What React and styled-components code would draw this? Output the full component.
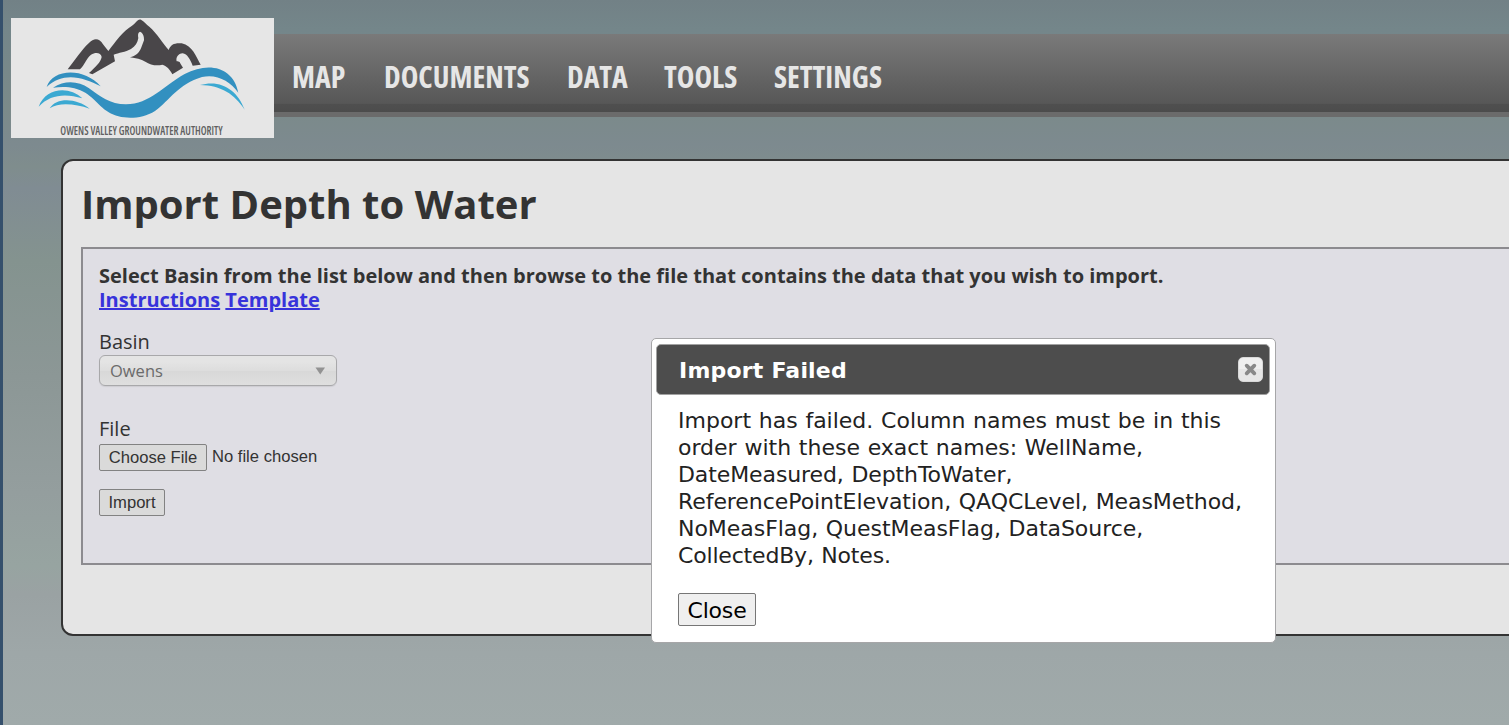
import React from "react";
import styled, { createGlobalStyle } from "styled-components";

const GlobalStyle = createGlobalStyle`
  *, *::before, *::after { box-sizing: border-box; }
  body { margin: 0; overflow: hidden; }
`;

const Page = styled.div`
  width: 100%;
  height: 725px;
  overflow: hidden;
  border-left: 3px solid #35506c;
  background: linear-gradient(180deg, #728186 0%, #74868a 4%, #7b8a8a 15%, #7d8a8f 20%, #7f8d8d 23%, #808c93 26%, #84938f 36%, #8c9796 52%, #949e9e 68%, #97a4a1 78%, #9aa2a3 82%, #9ea7a8 90%, #a0aaaa 100%);
  color: #333;
  font-family: "Open Sans", sans-serif;
`;

const Header = styled.header`
  display: flex;
  align-items: flex-start;
  padding: 18px 0 0 8px;
`;

const Logo = styled.svg`
  display: block;
  flex: none;
  width: 263px;
  height: 120px;
  background: #e6e6e6;
`;

const Nav = styled.nav`
  flex: 1;
  display: flex;
  align-items: center;
  gap: 38px;
  height: 83px;
  margin-top: 16px;
  padding: 7px 0 0 18px;
  border-bottom: 5px solid #6b6b6b;
  background: linear-gradient(180deg, #7a7a7a 0%, #606060 65%, #575757 89%, #4f4f4f 90%, #4c4c4c 100%);
`;

const NavLink = styled.a`
  width: ${(p) => p.$width}px;
  color: #e6e6e6;
  font-size: 29.8px;
  font-weight: 700;
  font-stretch: 75%;
  line-height: 40px;
  white-space: nowrap;
`;

const Panel = styled.main`
  width: 1600px;
  height: 477px;
  margin: 21px 0 0 58px;
  padding: 17px 18px 18px;
  border: 2px solid #333;
  border-radius: 12px;
  background: #e5e5e5;
`;

const Title = styled.h1`
  margin: 0 0 17px;
  height: 52px;
  font-size: 40px;
  line-height: 52px;
  font-weight: 700;
  white-space: nowrap;
`;

const ImportBox = styled.section`
  height: 318px;
  padding: 15px 16px;
  border: 2px solid #8c8b8f;
  background: #dfdee4;
`;

const Intro = styled.div`
  height: 48px;
  font-size: 20px;
  font-weight: 700;
  line-height: 24px;
  white-space: nowrap;
`;

const Link = styled.a`
  color: #3733db;
  text-decoration: underline;
  text-decoration-thickness: 2px;
`;

const Label = styled.div`
  height: 26px;
  margin-top: ${(p) => p.$gap}px;
  font-size: 20px;
  line-height: 26px;
`;

const Select = styled.div`
  display: flex;
  align-items: center;
  justify-content: space-between;
  width: 238px;
  height: 31px;
  padding: 0 10px;
  border: 1px solid #a8a8aa;
  border-radius: 6px;
  background: linear-gradient(#e4e4e4 20%, #dddddd 50%, #d8d8d8 52%, #dfdfdf 100%);
  box-shadow: 0 1px 1px rgba(0, 0, 0, 0.08);
  color: #6b6b6b;
  font-size: 16.5px;
`;

const FileRow = styled.div`
  display: flex;
  align-items: center;
  gap: 5px;
  margin: 2px 0 18px;
  font: 16.6px "Liberation Sans", sans-serif;
`;

const Button = styled.button`
  width: ${(p) => p.$width}px;
  height: 27px;
  padding: 0;
  border: 1px solid #828282;
  border-radius: 2px;
  background: #dadada;
  color: #333;
  font: 16.6px "Liberation Sans", sans-serif;
  white-space: nowrap;
`;

const FileName = styled.span`
  position: relative;
  top: -1px;
`;

const Dialog = styled.div`
  position: absolute;
  left: 651px;
  top: 338px;
  width: 625px;
  height: 305px;
  padding: 5px 5px 5px 4px;
  border: 1px solid #a6a6a8;
  border-radius: 5px;
  background: #fff;
  color: #222;
  font-family: "DejaVu Sans", sans-serif;
`;

const DialogHeader = styled.div`
  display: flex;
  align-items: center;
  justify-content: space-between;
  height: 51px;
  padding: 0 6px 0 22px;
  border: 1px solid #a2a2a2;
  border-radius: 5px;
  background: #4d4d4d;
  color: #fff;
  font: 700 22px/28px "DejaVu Sans", sans-serif;
  letter-spacing: 0.2px;
`;

const DialogTitle = styled.span`
  padding-top: 2px;
`;

const CloseIcon = styled.button`
  display: flex;
  align-items: center;
  justify-content: center;
  width: 25px;
  height: 25px;
  padding: 0;
  border: 1px solid #d8d8d8;
  border-radius: 5px;
  background: linear-gradient(#efefef 50%, #e6e6e6 50%);
`;

const Message = styled.div`
  margin: 12px 0 24px 22px;
  font-size: 22px;
  line-height: 27px;
  word-spacing: 0.75px;
  white-space: nowrap;
`;

const MessageLine = styled.div`
  letter-spacing: ${(p) => p.$spacing}px;
`;

const DialogButton = styled.button`
  display: block;
  width: 78px;
  height: 33px;
  margin-left: 22px;
  padding: 2px 0 0;
  border: 1px solid #767676;
  border-radius: 2px;
  background: #efefef;
  color: #000;
  font: 22px "DejaVu Sans", sans-serif;
  letter-spacing: -0.2px;
`;

const links = [
  ["MAP", 54],
  ["DOCUMENTS", 145],
  ["DATA", 59],
  ["TOOLS", 72],
  ["SETTINGS", 109],
];

const lines = [
  ["Import has failed. Column names must be in this", 0],
  ["order with these exact names: WellName,", 0],
  ["DateMeasured, DepthToWater,", -0.1],
  ["ReferencePointElevation, QAQCLevel, MeasMethod,", -0.06],
  ["NoMeasFlag, QuestMeasFlag, DataSource,", -0.04],
  ["CollectedBy, Notes.", -0.18],
];

function LogoArt() {
  return (
    <Logo viewBox="33 54 789 360" preserveAspectRatio="none">
      <g fill="#494649">
        <path d="M203 208C225 181 245 149 266 130C283 112 298 115 309 133L325 153C346 125 370 92 396 77C409 70 411 56 423 59C435 65 438 74 448 80C470 99 490 132 506 150C512 133 524 128 545 130C578 137 588 170 602 194L578 197C571 179 562 162 548 160C534 160 527 174 530 184Q540 182 542 192L549 203L517 223C510 208 499 197 487 194C468 199 451 194 436 185C423 177 408 175 390 172C407 168 418 158 423 145L432 121C433 109 429 98 420 95C413 98 414 106 415 114C413 128 406 139 393 147C376 157 356 158 341 164L345 184L277 223L267 219C286 202 302 187 305 171C303 158 287 156 273 164C259 175 253 196 240 208Z" />
      </g>
      <g fill="#3290c0">
        <path d="M159 263C195 239 236 243 266 264C300 288 330 313 378 313C450 312 490 258 554 222C625 184 700 200 715 278C690 243 650 221 606 231C535 252 510 300 465 333C420 361 360 358 326 337C291 316 275 278 223 265C205 260 182 260 159 263Z" />
        <path d="M140 261C157 205 253 201 302 259C249 231 190 214 140 261Z" />
      </g>
      <g fill="#3ba9d2">
        <path d="M116 320C137 263 207 257 247 295C198 280 151 282 116 320Z" />
        <path d="M149 325C170 291 230 294 269 326C226 312 178 306 149 325Z" />
        <path d="M600 255C665 237 713 272 734 329C704 283 664 256 600 255Z" />
      </g>
      <text x="181" y="404" textLength="487" lengthAdjust="spacingAndGlyphs" fill="#606060" fontSize="38" fontWeight="600" fontFamily="Open Sans, sans-serif" fontStretch="75%">
        OWENS VALLEY GROUNDWATER AUTHORITY
      </text>
    </Logo>
  );
}

export default function App() {
  return (
    <Page>
      <GlobalStyle />
      <Header>
        <LogoArt />
        <Nav>
          {links.map(([name, width]) => (
            <NavLink key={name} $width={width}>{name}</NavLink>
          ))}
        </Nav>
      </Header>
      <Panel>
        <Title>Import Depth to Water</Title>
        <ImportBox>
          <Intro>
            Select Basin from the list below and then browse to the file that contains the data that you wish to import.
            <br />
            <Link>Instructions</Link> <Link>Template</Link>
          </Intro>
          <Label $gap={17}>Basin</Label>
          <Select>
            Owens
            <svg width="12" height="8" viewBox="0 0 12 8"><path d="M1.5 0.5H11L6.25 7.5Z" fill="#929292" /></svg>
          </Select>
          <Label $gap={30}>File</Label>
          <FileRow>
            <Button $width={108}>Choose File</Button>
            <FileName>No file chosen</FileName>
          </FileRow>
          <Button $width={66}>Import</Button>
        </ImportBox>
      </Panel>
      <Dialog role="dialog">
        <DialogHeader>
          <DialogTitle>Import Failed</DialogTitle>
          <CloseIcon aria-label="Close">
            <svg width="13" height="13" viewBox="0 0 13 13"><path d="M2.7 2.7L10.3 10.3M10.3 2.7L2.7 10.3" stroke="#888" strokeWidth="3.8" strokeLinecap="round" /></svg>
          </CloseIcon>
        </DialogHeader>
        <Message>
          {lines.map(([line, spacing]) => (
            <MessageLine key={line} $spacing={spacing}>{line}</MessageLine>
          ))}
        </Message>
        <DialogButton>Close</DialogButton>
      </Dialog>
    </Page>
  );
}
